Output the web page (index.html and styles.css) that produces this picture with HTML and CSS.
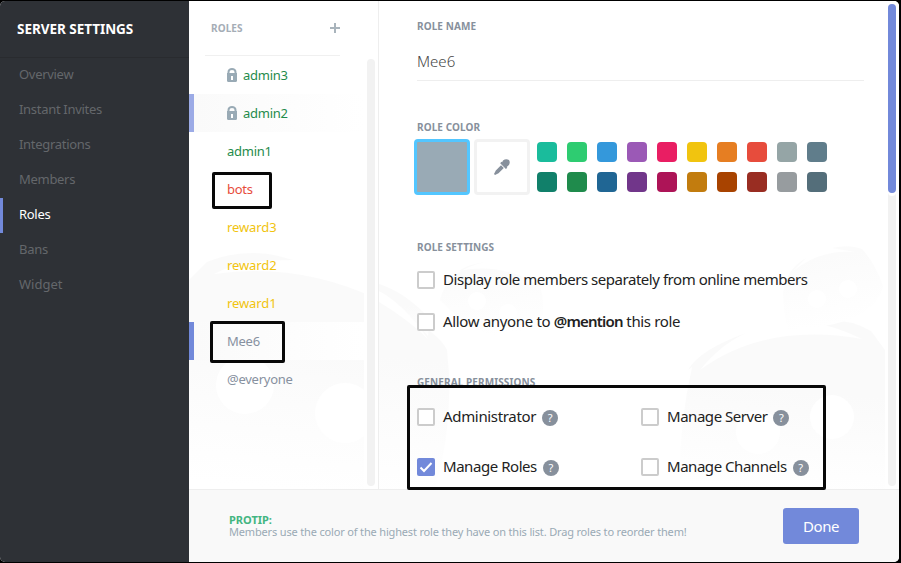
FILE: index.html
```html
<!DOCTYPE html>
<html lang="en">
<head>
<meta charset="utf-8">
<title>Server Settings</title>
<link rel="stylesheet" href="styles.css">
</head>
<body>
<div class="app">
  <nav class="sidebar">
    <h1>SERVER SETTINGS</h1>
    <a>Overview</a>
    <a>Instant Invites</a>
    <a>Integrations</a>
    <a>Members</a>
    <a class="active">Roles</a>
    <a>Bans</a>
    <a class="widget">Widget</a>
  </nav>
  <div class="main">
    <svg class="robots" width="710" height="488" viewBox="189 1 710 488" aria-hidden="true">
      <defs>
        <linearGradient id="big" x1=".45" y1="0" x2=".35" y2="1"><stop offset=".4" stop-color="#fafafa"/><stop offset="1" stop-color="#fff"/></linearGradient>
        <linearGradient id="small" x1="0" y1="0" x2=".2" y2="1"><stop offset=".2" stop-color="#fbfbfb"/><stop offset="1" stop-color="#fff"/></linearGradient>
      </defs>
      <g fill="url(#big)">
        <path d="M189 280L207 262Q249 245 293 260Q240 260 214 274Q300 262 379 300L400 312Q440 334 447 350Q455 420 435 489H189Z"/>
        <path d="M379 284Q405 292 430 319L428 336Q410 315 379 300Z"/>
        <path d="M688 370Q699 350 746 333Q720 345 700 370Q765 322 862 339Q836 326 806 321Q846 316 871 331L885 350V489H680Q678 430 692 367Z"/>
      </g>
      <path d="M379 291Q404 304 428 339Q406 318 379 302Z" fill="#fff"/>
      <g fill="url(#small)">
        <path d="M440 300Q447 270 485 262Q466 265 459 271Q502 262 540 286Q548 310 536 340Q483 346 440 300Z"/>
        <path d="M783 294Q785 270 806 258L793 271Q821 249 855 252L832 248Q850 244 862 249Q875 263 883 286Q874 326 788 330Q784 318 783 294Z"/>
      </g>
      <g fill="#fff"><circle cx="245" cy="385" r="29"/><circle cx="345" cy="413" r="30"/><circle cx="758" cy="432" r="22"/><circle cx="832" cy="417" r="22"/><circle cx="477" cy="301" r="9"/><circle cx="508" cy="313" r="9"/><circle cx="817" cy="299" r="9"/><circle cx="848" cy="289" r="9"/><rect x="364" y="1" width="15" height="488"/><rect x="885" y="1" width="14" height="488"/></g>
    </svg>
    <div class="columns">
      <section class="roles">
        <div class="roles-head"><span class="caption">ROLES</span>
          <svg width="12" height="12" viewBox="0 0 12 12"><path d="M6 1v10M1 6h10" stroke="#a9b4bc" stroke-width="2"/></svg>
        </div>
        <div class="role green"><svg class="lock" width="10" height="14" viewBox="0 0 10 14"><path d="M1.500 6V4a3.500 3 0 0 1 7 0v2" fill="none" stroke="#99aab5" stroke-width="2"/><path d="M0 5h10v7.500q0 1.500-1.500 1.500h-7Q0 14 0 12.500z" fill="#99aab5"/><path d="M4 8h2v4H4z" fill="#fff"/></svg>admin3</div>
        <div class="role green hover"><svg class="lock" width="10" height="14" viewBox="0 0 10 14"><path d="M1.500 6V4a3.500 3 0 0 1 7 0v2" fill="none" stroke="#99aab5" stroke-width="2"/><path d="M0 5h10v7.500q0 1.500-1.500 1.500h-7Q0 14 0 12.500z" fill="#99aab5"/><path d="M4 8h2v4H4z" fill="#fff"/></svg>admin2</div>
        <div class="role green">admin1</div>
        <div class="role red">bots</div>
        <div class="role yellow">reward3</div>
        <div class="role yellow">reward2</div>
        <div class="role yellow">reward1</div>
        <div class="role selected">Mee6</div>
        <div class="role">@everyone</div>
        <div class="roles-track"></div>
      </section>
      <section class="settings">
        <div class="caption">ROLE NAME</div>
        <div class="name">Mee6</div>
        <div class="caption color-caption">ROLE COLOR</div>
        <div class="colors">
          <div class="current"></div>
          <div class="picker"><svg width="16" height="16" viewBox="0 0 16 16"><path d="M9 1.500Q12-.8 15 1q1.800 3-.8 5.700L12.700 8l.6.700-1.400 1.200-5.700-5.700L7.400 2.700l.7.600zM7 6.200L9.800 9 4.500 14.200 1 16 0 15l1.800-3.500z" fill="#87909c"/></svg></div>
          <div class="swatches">
            <i class="c1"></i><i class="c2"></i><i class="c3"></i><i class="c4"></i><i class="c5"></i><i class="c6"></i><i class="c7"></i><i class="c8"></i><i class="c9"></i><i class="c10"></i>
            <i class="d1"></i><i class="d2"></i><i class="d3"></i><i class="d4"></i><i class="d5"></i><i class="d6"></i><i class="d7"></i><i class="d8"></i><i class="d9"></i><i class="d10"></i>
          </div>
        </div>
        <div class="caption settings-caption">ROLE SETTINGS</div>
        <div class="check first"><b class="box"></b><span class="t-display">Display role members separately from online members</span></div>
        <div class="check second"><b class="box"></b><span class="t-allow">Allow anyone to <strong>@mention</strong> this role</span></div>
        <div class="caption perm-caption">GENERAL PERMISSIONS</div>
        <div class="perms">
          <div class="check"><b class="box"></b><span class="t-admin">Administrator</span><em>?</em></div>
          <div class="check"><b class="box"></b><span class="t-server">Manage Server</span><em>?</em></div>
          <div class="check"><b class="box on"><svg width="18" height="18" viewBox="0 0 18 18"><path d="M3.500 9.500l3.500 3.500 7.500-8" fill="none" stroke="#fff" stroke-width="2"/></svg></b><span class="t-roles">Manage Roles</span><em>?</em></div>
          <div class="check"><b class="box"></b><span class="t-channels">Manage Channels</span><em>?</em></div>
        </div>
        <div class="main-track"><div class="thumb"></div></div>
      </section>
    </div>
    <footer>
      <div class="tip"><strong>PROTIP:</strong><span>Members use the color of the highest role they have on this list. Drag roles to reorder them!</span></div>
      <button>Done</button>
    </footer>
  </div>
</div>
<div class="mark mark-bots"></div>
<div class="mark mark-mee"></div>
<div class="mark mark-perms"></div>
</body>
</html>
```
FILE: styles.css
```css
* { box-sizing: border-box; }
body { margin: 0; width: 901px; height: 563px; overflow: hidden; background: #000; padding: 1px 2px 1px 0; font-family: "Noto Sans", "Open Sans", sans-serif; font-size: 13px; }
.app { display: flex; width: 899px; height: 561px; border-radius: 5px; overflow: hidden; background: #fff; }
.sidebar { width: 189px; background: #2e3136; flex: none; }
.sidebar h1 { margin: 0; height: 57px; border-bottom: 1px solid #292b2f; padding-left: 17px; font-size: 13.5px; line-height: 56px; color: #fff; letter-spacing: -.04px; white-space: nowrap; }
.sidebar a { display: block; height: 35px; line-height: 32px; padding-left: 19px; color: #64676b; font-size: 13px; letter-spacing: -.3px; }
.sidebar .widget { letter-spacing: 0; }
.sidebar .active { color: #fff; border-left: 3px solid #7289da; padding-left: 16px; }
.main { position: relative; flex: 1; display: flex; flex-direction: column; }
.robots { position: absolute; left: 0; top: 0; }
.columns { position: relative; display: flex; height: 488px; }
.caption { font-size: 10px; font-weight: 700; line-height: 14px; color: #87909c; white-space: nowrap; letter-spacing: .1px; }
.roles { position: relative; width: 190px; border-right: 1px solid #eee; }
.roles-head { display: flex; justify-content: space-between; align-items: center; width: 135px; height: 55px; margin-left: 16px; padding: 0 0 1px 6px; border-bottom: 1px solid #f0f0f0; }
.roles-head svg { margin-right: -1px; }
.roles-head .caption { color: #a5adb6; }
.role { display: flex; align-items: center; width: 175px; height: 38px; padding: 0 0 0 38px; line-height: 18px; color: #8791a0; letter-spacing: -.25px; }
.lock { margin-right: 6px; }
.green { color: #1f8b4c; }
.red { color: #e74c3c; }
.yellow { color: #f1c40f; letter-spacing: -.1px; }
.hover, .selected { border-left: 5px solid #9cabe6; padding-left: 33px; background: linear-gradient(90deg, #fafafa, #fff); }
.selected { border-color: #7289da; }
.roles-track { position: absolute; left: 178px; top: 58px; width: 8px; height: 427px; border-radius: 4px; background: #f2f2f2; }
.settings { position: relative; flex: 1; padding: 18px 0 0 38px; }
.name { width: 447px; height: 48px; border-bottom: 1px solid #eee; font-size: 15px; line-height: 57px; color: #444; font-weight: 300; }
.color-caption { margin-top: 39px; }
.colors { display: flex; margin: 5px 0 0 -3px; }
.current, .picker { width: 56px; height: 56px; border-radius: 4px; margin-right: 4px; }
.current { border: 3px solid #53c6ff; background: #99aab5; }
.picker { border: 3px solid #f2f2f2; background: #fff; display: flex; align-items: center; justify-content: center; }
.swatches { display: grid; grid-template-columns: repeat(10, 20px); gap: 10px; margin: 3px 0 0 3px; height: 50px; }
.swatches i { height: 20px; border-radius: 4px; }
.c1 { background: #1abc9c; } .c2 { background: #2ecc71; } .c3 { background: #3498db; } .c4 { background: #9b59b6; } .c5 { background: #e91e63; }
.c6 { background: #f1c40f; } .c7 { background: #e67e22; } .c8 { background: #e74c3c; } .c9 { background: #95a5a6; } .c10 { background: #607d8b; }
.d1 { background: #11806a; } .d2 { background: #1f8b4c; } .d3 { background: #206694; } .d4 { background: #71368a; } .d5 { background: #ad1457; }
.d6 { background: #c27c0e; } .d7 { background: #a84300; } .d8 { background: #992d22; } .d9 { background: #979c9f; } .d10 { background: #546e7a; }
.settings-caption { margin-top: 45px; }
.check { display: flex; align-items: center; height: 18px; font-size: 15px; line-height: 18px; color: #222; white-space: nowrap; }
.check span { margin: -2px 0 0 8px; letter-spacing: -.46px; }
.check strong { font-weight: 600; letter-spacing: -.8px; }
.check .t-allow { letter-spacing: -.34px; }
.check .t-admin { letter-spacing: -.33px; }
.check .t-roles { letter-spacing: -.45px; }
.first { margin-top: 17px; }
.second { margin-top: 24px; }
.box { width: 18px; height: 18px; border: 2px solid #ccc; border-radius: 2px; background: #fff; flex: none; }
.box.on { border: 0; background: #7289da; }
.box svg { display: block; }
.perm-caption { margin-top: 44px; }
.perms { display: grid; grid-template-columns: 224px 224px; row-gap: 32px; margin-top: 19px; }
.check em { width: 16px; height: 16px; margin: 2px 0 0 6px; border-radius: 50%; background: #87909c; color: #fff; font-size: 11px; line-height: 16px; font-style: normal; text-align: center; letter-spacing: 0; }
.main-track { position: absolute; left: 509px; top: 3px; width: 8px; height: 482px; border-radius: 4px; background: #f2f2f2; }
.thumb { height: 189px; border-radius: 4px; background: #7289da; box-shadow: 0 3px 0 #fff; }
footer { position: relative; display: flex; align-items: center; justify-content: space-between; flex: 1; padding: 0 40px; border-top: 1px solid #eee; background: #f9f9f9; }
.tip { display: flex; flex-direction: column; font-size: 11px; line-height: 12px; color: #99aab5; white-space: nowrap; }
.tip strong { color: #43b581; }
.tip span { letter-spacing: -.165px; }
button { width: 76px; height: 36px; border: 0; border-radius: 3px; background: #7289da; color: #fff; font: 15px "Noto Sans", sans-serif; letter-spacing: -.4px; padding: 0; }
.mark { position: absolute; border: 3px solid #080808; border-radius: 2px; }
.mark-bots { left: 212px; top: 172px; width: 60px; height: 37px; }
.mark-mee { left: 210px; top: 321px; width: 75px; height: 42px; }
.mark-perms { left: 407px; top: 385px; width: 419px; height: 105px; }
```
